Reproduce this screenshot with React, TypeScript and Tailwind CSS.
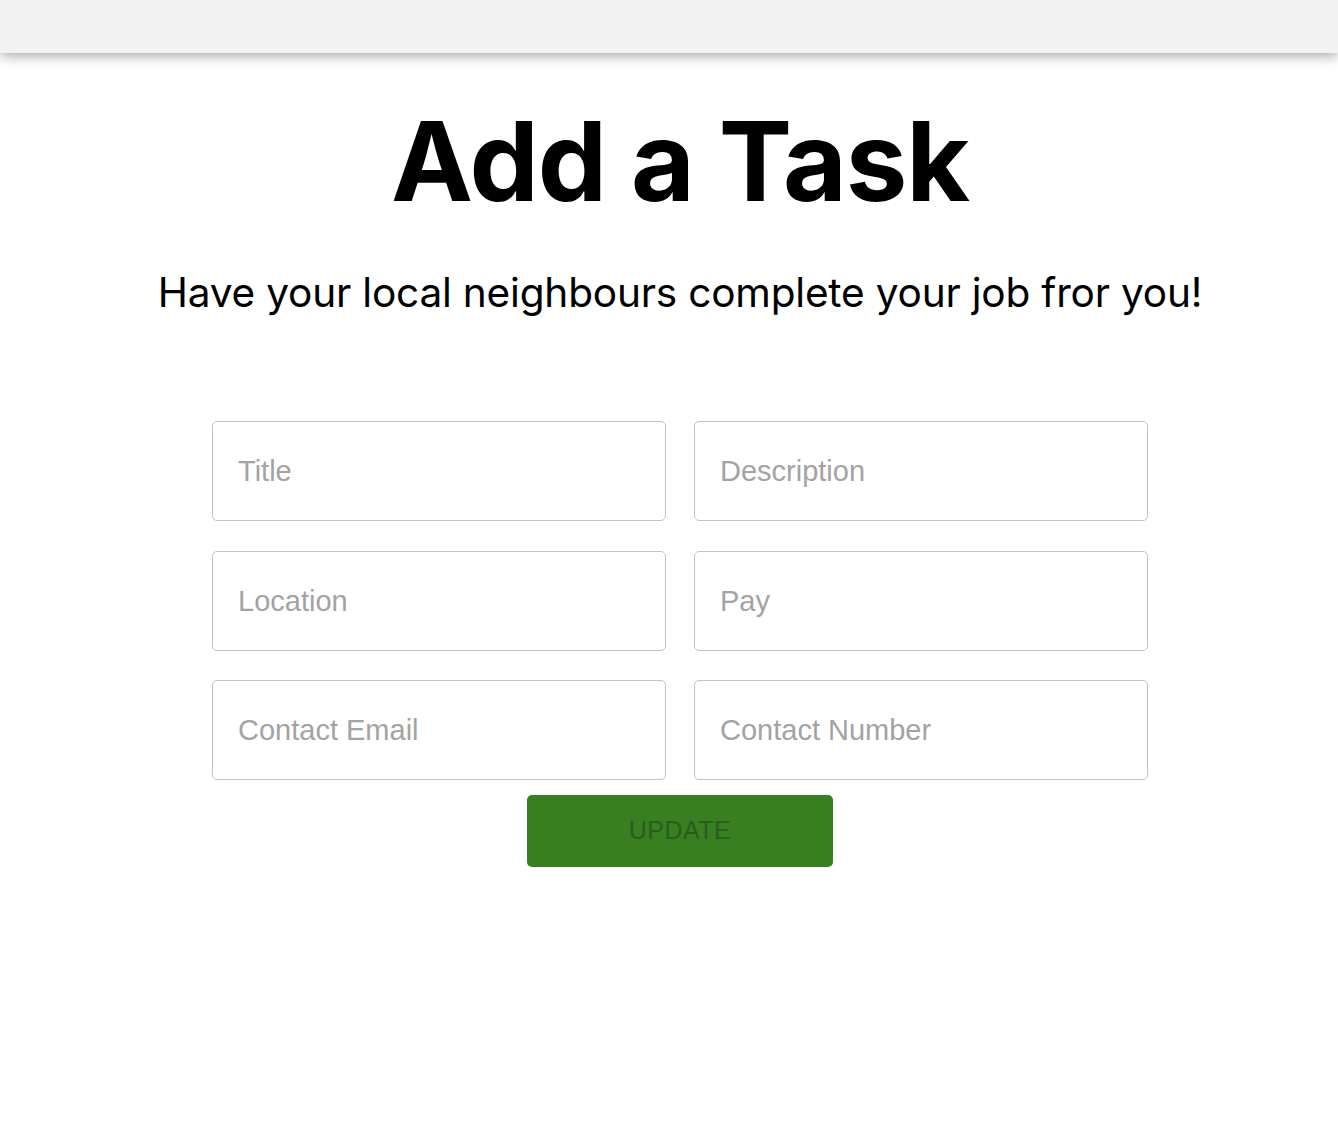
import React from "react";

const fields = [
  "Title",
  "Description",
  "Location",
  "Pay",
  "Contact Email",
  "Contact Number",
];

export default function App() {
  return (
    <div className="min-h-[1146px] bg-white">
      {/* top bar */}
      <div className="h-[53px] bg-[#f2f2f2] shadow-[0_3px_12px_rgba(0,0,0,0.35)]" />

      <div className="flex flex-col items-center pl-[22px] font-['Inter',sans-serif] text-black">
        <h1 className="mt-[48px] text-[110px] leading-[120px] font-bold tracking-[-0.01em]">
          Add a Task
        </h1>
        <p className="mt-[48px] text-[40.6px] leading-[48px] font-normal tracking-[-0.005em]">
          Have your local neighbours complete your job fror you!
        </p>
      </div>

      <form className="mt-[104px] flex flex-col items-center pl-[22px] font-['Liberation_Sans',Arial,sans-serif]">
        <div className="grid grid-cols-[454px_454px] gap-x-[28px] gap-y-[30px]">
          {fields.map((f, i) => (
            <input
              key={f}
              placeholder={f}
              className={`h-[100px] rounded-[5px] border border-[#c4c4c4] px-[25px] text-[29px] text-black outline-none placeholder:text-[#a3a3a3] ${i >= 4 ? "-mt-px" : ""}`}
            />
          ))}
        </div>
        <button
          type="button"
          className="mt-[15px] h-[72px] w-[306px] rounded-[5px] bg-[#387f22] text-[25px] tracking-[0.02em] text-[#2a5c1b]"
        >
          UPDATE
        </button>
      </form>
    </div>
  );
}
